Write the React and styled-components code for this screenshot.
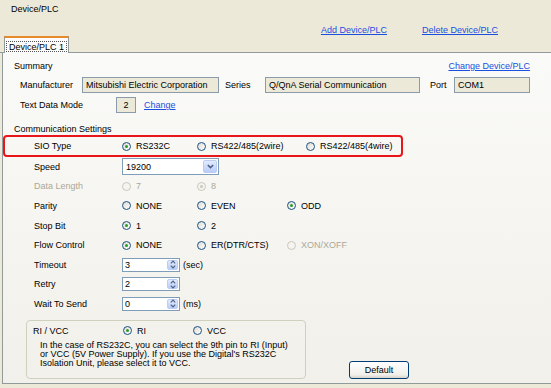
import React from 'react'
import styled, { createGlobalStyle, css } from 'styled-components'

const GlobalStyle = createGlobalStyle`
  html, body {
    margin: 0;
    padding: 0;
  }
  body {
    background: #ece9d8;
    font-family: 'Liberation Sans', Arial, sans-serif;
    font-size: 9px;
    color: #000;
    width: 551px;
    height: 388px;
    overflow: hidden;
  }
`

const Window = styled.div`
  width: 551px;
  height: 388px;
  display: flex;
  flex-direction: column;
`

const Header = styled.header`
  display: flex;
  flex-direction: column;
`

const Title = styled.div`
  padding: 3px 0 0 11px;
  line-height: 12px;
`

const HeaderLinks = styled.div`
  display: flex;
  justify-content: flex-end;
  gap: 35px;
  padding-right: 53px;
  margin-top: 9px;
  line-height: 12px;
`

const Link = styled.a`
  color: #1a4fe0;
  text-decoration: underline;
  cursor: pointer;
`

const TabStrip = styled.div`
  display: flex;
  height: 16px;
  padding-left: 4px;
  border-bottom: 1px solid #919b9c;
`

const Tab = styled.div`
  box-sizing: border-box;
  width: 65px;
  height: 17px;
  margin-bottom: -1px;
  background: #fcfcfe;
  border: 1px solid #919b9c;
  border-top: 2px solid #e68b2c;
  border-bottom: none;
  display: flex;
  align-items: center;
  justify-content: center;
  padding-top: 2px;
`

const TabLabel = styled.span`
  box-sizing: border-box;
  width: 61px;
  height: 11px;
  border: 1px dotted #555;
  display: flex;
  align-items: center;
  justify-content: center;
`

const Panel = styled.main`
  margin-left: 2px;
  border-left: 1px solid #919b9c;
  border-bottom: 1px solid #919b9c;
  background: linear-gradient(#fafaf8, #f1f0ea);
  padding: 7px 0 4px;
  display: flex;
  flex-direction: column;
`

const SectionHead = styled.div`
  display: flex;
  justify-content: space-between;
  line-height: 12px;
  padding: 0 21px 0 11px;
  margin-top: ${p => p.$gap || 0}px;
`

const SummaryRow = styled.div`
  display: flex;
  align-items: center;
  height: 16px;
  padding-left: 17px;
  margin-top: ${p => p.$gap}px;
`

const InlineLabel = styled.span`
  width: ${p => p.$width}px;
  margin-left: ${p => p.$offset || 0}px;
  flex-shrink: 0;
`

const ReadBox = styled.div`
  box-sizing: border-box;
  width: ${p => p.$width}px;
  height: 16px;
  border: 1px solid #8a9cab;
  background: #ece9d8;
  padding-left: ${p => (p.$center ? 0 : 3)}px;
  display: flex;
  align-items: center;
  justify-content: ${p => (p.$center ? 'center' : 'flex-start')};
  flex-shrink: 0;
  white-space: nowrap;
  overflow: hidden;
`

const ChangeLink = styled(Link)`
  margin-left: 8px;
`

const FieldRow = styled.div`
  box-sizing: border-box;
  display: flex;
  align-items: center;
  height: 19.6px;
  padding-left: 31px;
  ${p =>
    p.$highlight &&
    css`
      width: 400px;
      height: 22px;
      border: 2px solid #e8151b;
      border-radius: 4px;
      padding-left: 29px;
    `}
`

const FieldLabel = styled.span`
  width: ${p => p.$width || 88}px;
  flex-shrink: 0;
  color: ${p => (p.$disabled ? '#aca899' : '#000')};
`

const RadioOption = styled.label`
  display: flex;
  align-items: center;
  width: ${p => (p.$width ? `${p.$width}px` : 'auto')};
  flex-shrink: 0;
  white-space: nowrap;
  color: ${p => (p.$disabled ? '#aca899' : '#000')};
`

const RadioMark = styled.span`
  box-sizing: border-box;
  width: 9px;
  height: 9px;
  border-radius: 50%;
  margin-right: 5px;
  border: 1px solid ${p => (p.$disabled ? '#cac8bb' : '#1c5180')};
  background: ${p =>
    p.$disabled ? '#f5f4ef' : 'linear-gradient(135deg, #dcdad2, #ffffff)'};
  display: flex;
  align-items: center;
  justify-content: center;
  &::after {
    content: '';
    display: ${p => (p.$checked ? 'block' : 'none')};
    width: 3px;
    height: 3px;
    border-radius: 50%;
    background: ${p => (p.$disabled ? '#cac8bb' : '#2a9b2a')};
  }
`

const Select = styled.div`
  box-sizing: border-box;
  width: 97px;
  height: 17px;
  border: 1px solid #7f9db9;
  background: #fff;
  padding: 1px 1px 1px 3px;
  display: flex;
  align-items: center;
  justify-content: space-between;
`

const DropButton = styled.span`
  box-sizing: border-box;
  width: 14px;
  align-self: stretch;
  border: 1px solid #bccdf5;
  border-radius: 2px;
  background: linear-gradient(#e3ebfe, #b9cdf8);
  display: flex;
  align-items: center;
  justify-content: center;
`

const SpinBox = styled.div`
  box-sizing: border-box;
  width: 58px;
  height: 14px;
  border: 1px solid #7f9db9;
  background: #fff;
  padding: 1px 1px 1px 2px;
  display: flex;
  align-items: center;
`

const SpinValue = styled.span`
  flex: 1;
`

const SpinButton = styled.span`
  box-sizing: border-box;
  width: 11px;
  align-self: stretch;
  border: 1px solid #bccdf5;
  border-radius: 2px;
  background: linear-gradient(#e3ebfe, #b9cdf8);
  display: flex;
  align-items: center;
  justify-content: center;
`

const Unit = styled.span`
  margin-left: 3px;
`

const BottomArea = styled.div`
  display: flex;
  align-items: flex-end;
  margin: 6px 0 0 23px;
`

const GroupBox = styled.div`
  box-sizing: border-box;
  width: 280px;
  height: 59px;
  border: 1px solid #d0d0bf;
  border-radius: 4px;
  padding: 4px 0 0 6px;
`

const GroupRow = styled.div`
  display: flex;
  align-items: center;
  height: 12px;
`

const Description = styled.p`
  margin: 4px 0 0 7px;
  line-height: 9px;
  white-space: nowrap;
`

const Button = styled.button`
  box-sizing: border-box;
  width: 60px;
  height: 18px;
  margin-left: 43px;
  padding: 0;
  border: 1px solid #003c74;
  border-radius: 3px;
  background: linear-gradient(#ffffff, #f0efea 80%, #d8d2c6);
  font: inherit;
  color: #000;
`

const Chevron = () => (
  <svg width="7" height="5" viewBox="0 0 7 5">
    <polyline points="0.8,1 3.5,3.6 6.2,1" fill="none" stroke="#4d6185" strokeWidth="1.6" />
  </svg>
)

const UpDown = () => (
  <svg width="6" height="9" viewBox="0 0 6 9">
    <polyline points="0.8,3.4 3,1.2 5.2,3.4" fill="none" stroke="#4d6185" strokeWidth="1.2" />
    <polyline points="0.8,5.6 3,7.8 5.2,5.6" fill="none" stroke="#4d6185" strokeWidth="1.2" />
  </svg>
)

const Radio = ({ label, checked, disabled, width }) => (
  <RadioOption $width={width} $disabled={disabled}>
    <RadioMark $checked={checked} $disabled={disabled} />
    {label}
  </RadioOption>
)

const Spinner = ({ value, unit }) => (
  <>
    <SpinBox>
      <SpinValue>{value}</SpinValue>
      <SpinButton>
        <UpDown />
      </SpinButton>
    </SpinBox>
    {unit && <Unit>{unit}</Unit>}
  </>
)

const App = () => (
  <Window>
    <GlobalStyle />
    <Header>
      <Title>Device/PLC</Title>
      <HeaderLinks>
        <Link>Add Device/PLC</Link>
        <Link>Delete Device/PLC</Link>
      </HeaderLinks>
      <TabStrip>
        <Tab>
          <TabLabel>Device/PLC 1</TabLabel>
        </Tab>
      </TabStrip>
    </Header>
    <Panel>
      <SectionHead>
        <span>Summary</span>
        <Link>Change Device/PLC</Link>
      </SectionHead>
      <SummaryRow $gap={5}>
        <InlineLabel $width={62}>Manufacturer</InlineLabel>
        <ReadBox $width={137}>Mitsubishi Electric Corporation</ReadBox>
        <InlineLabel $width={40} $offset={6}>Series</InlineLabel>
        <ReadBox $width={155}>Q/QnA Serial Communication</ReadBox>
        <InlineLabel $width={24} $offset={10}>Port</InlineLabel>
        <ReadBox $width={76}>COM1</ReadBox>
      </SummaryRow>
      <SummaryRow $gap={4}>
        <InlineLabel $width={96}>Text Data Mode</InlineLabel>
        <ReadBox $width={20} $center>2</ReadBox>
        <ChangeLink>Change</ChangeLink>
      </SummaryRow>

      <SectionHead $gap={10}>
        <span>Communication Settings</span>
      </SectionHead>
      <FieldRow $highlight>
        <FieldLabel>SIO Type</FieldLabel>
        <Radio label="RS232C" checked width={75} />
        <Radio label="RS422/485(2wire)" width={109} />
        <Radio label="RS422/485(4wire)" />
      </FieldRow>
      <FieldRow>
        <FieldLabel>Speed</FieldLabel>
        <Select>
          <span>19200</span>
          <DropButton>
            <Chevron />
          </DropButton>
        </Select>
      </FieldRow>
      <FieldRow>
        <FieldLabel $disabled>Data Length</FieldLabel>
        <Radio label="7" disabled width={75} />
        <Radio label="8" disabled checked />
      </FieldRow>
      <FieldRow>
        <FieldLabel>Parity</FieldLabel>
        <Radio label="NONE" width={75} />
        <Radio label="EVEN" width={90} />
        <Radio label="ODD" checked />
      </FieldRow>
      <FieldRow>
        <FieldLabel>Stop Bit</FieldLabel>
        <Radio label="1" checked width={75} />
        <Radio label="2" />
      </FieldRow>
      <FieldRow>
        <FieldLabel>Flow Control</FieldLabel>
        <Radio label="NONE" checked width={75} />
        <Radio label="ER(DTR/CTS)" width={90} />
        <Radio label="XON/XOFF" disabled />
      </FieldRow>
      <FieldRow>
        <FieldLabel>Timeout</FieldLabel>
        <Spinner value="3" unit="(sec)" />
      </FieldRow>
      <FieldRow>
        <FieldLabel>Retry</FieldLabel>
        <Spinner value="2" />
      </FieldRow>
      <FieldRow>
        <FieldLabel>Wait To Send</FieldLabel>
        <Spinner value="0" unit="(ms)" />
      </FieldRow>

      <BottomArea>
        <GroupBox>
          <GroupRow>
            <FieldLabel $width={90}>RI / VCC</FieldLabel>
            <Radio label="RI" checked width={70} />
            <Radio label="VCC" />
          </GroupRow>
          <Description>
            In the case of RS232C, you can select the 9th pin to RI (Input)
            <br />
            or VCC (5V Power Supply). If you use the Digital's RS232C
            <br />
            Isolation Unit, please select it to VCC.
          </Description>
        </GroupBox>
        <Button>Default</Button>
      </BottomArea>
    </Panel>
  </Window>
)

export default App
